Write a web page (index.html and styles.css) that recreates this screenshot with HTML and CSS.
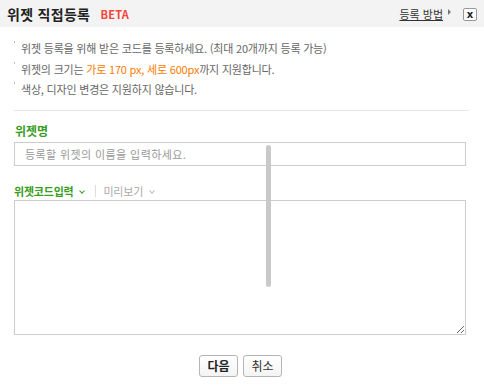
FILE: index.html
```html
<!DOCTYPE html>
<html lang="ko">
<head>
    <meta charset="UTF-8">
    <title>위젯 직접등록</title>
    <link rel="stylesheet" href="styles.css">
</head>
<body>
    <div class="layer-header">
        <h1 class="layer-title">위젯 직접등록 <span class="beta">BETA</span></h1>
        <a href="#" class="help-link">등록 방법</a>
        <span class="help-arrow"></span>
        <button class="close-btn" type="button">x</button>
    </div>

    <div class="layer-body">
        <ul class="notice-list">
            <li>위젯 등록을 위해 받은 코드를 등록하세요. (최대 20개까지 등록 가능)</li>
            <li>위젯의 크기는 <em>가로 170 px, 세로 600px</em>까지 지원합니다.</li>
            <li>색상, 디자인 변경은 지원하지 않습니다.</li>
        </ul>

        <div class="field-label">위젯명</div>
        <input type="text" class="name-input" placeholder="등록할 위젯의 이름을 입력하세요.">

        <div class="code-tabs">
            <a href="#" class="tab tab-on">위젯코드입력 <span class="chev"></span></a>
            <span class="tab-bar"></span>
            <a href="#" class="tab">미리보기 <span class="chev"></span></a>
        </div>
        <textarea class="code-input"></textarea>

        <div class="btn-area">
            <button type="button" class="btn btn-strong">다음</button>
            <button type="button" class="btn">취소</button>
        </div>
    </div>

    <div class="scroll-thumb"></div>
</body>
</html>
```

FILE: styles.css
```css
* {
    box-sizing: border-box;
    margin: 0;
    padding: 0;
}

body {
    font-family: "Noto Sans CJK KR", "Noto Sans", sans-serif;
    font-size: 11px;
    color: #666;
    background: #fff;
    position: relative;
    width: 484px;
    height: 387px;
    overflow: hidden;
}

a {
    text-decoration: none;
}

.layer-header {
    height: 27px;
    background: #f3f3f3;
    display: flex;
    align-items: center;
    padding: 0 7px;
}

.layer-title {
    flex: 1;
    font-size: 14px;
    font-weight: bold;
    color: #222;
    line-height: 18px;
    letter-spacing: 0.3px;
}

.beta {
    margin-left: 6px;
    font-size: 11px;
    color: #f5453d;
    letter-spacing: 0.2px;
    vertical-align: 1px;
}

.help-link {
    color: #333;
    font-size: 11px;
    text-decoration: underline;
    line-height: 14px;
}

.help-arrow {
    width: 0;
    height: 0;
    border-left: 3px solid #777;
    border-top: 3px solid transparent;
    border-bottom: 3px solid transparent;
    margin: 0 0 4px 5px;
}

.close-btn {
    width: 14px;
    height: 13px;
    margin-left: 12px;
    border: 1px solid #999;
    border-radius: 2px;
    background: #fff;
    font-family: "DejaVu Sans", sans-serif;
    font-size: 10px;
    font-weight: bold;
    line-height: 9px;
    color: #222;
    margin-top: 2px;
}

.layer-body {
    padding: 11px 18px 0 14px;
}

.notice-list {
    list-style: none;
    padding-bottom: 10px;
    border-bottom: 1px solid #e6e6e6;
    margin-right: -3px;
}

.notice-list li {
    line-height: 20.5px;
    letter-spacing: -0.2px;
}

.notice-list li::before {
    content: "";
    display: inline-block;
    width: 1px;
    height: 2px;
    background: #bbb;
    vertical-align: 10px;
    margin-right: 6px;
}

.notice-list em {
    font-style: normal;
    color: #ff7b00;
}

.field-label {
    margin-top: 12px;
    font-size: 12px;
    font-weight: bold;
    line-height: 16px;
    color: #3a9d23;
    padding-left: 1px;
}

.name-input {
    display: block;
    margin-top: 3px;
    width: 100%;
    height: 24px;
    border: 1px solid #ccc;
    padding: 0 10px;
    font-family: inherit;
    font-size: 11px;
    letter-spacing: 0.4px;
    outline: none;
}

.name-input::placeholder {
    color: #999;
}

.code-tabs {
    margin-top: 17px;
    display: flex;
    align-items: center;
    height: 16px;
}

.tab {
    font-size: 11px;
    color: #aaa;
    line-height: 16px;
    letter-spacing: -0.2px;
}

.tab-on {
    color: #3a9d23;
    font-weight: bold;
}

.chev {
    display: inline-block;
    width: 4px;
    height: 4px;
    border-right: 1px solid #bbb;
    border-bottom: 1px solid #bbb;
    transform: rotate(45deg);
    margin: 0 2px 3px 4px;
}

.tab-on .chev {
    border-color: #3a9d23;
    border-width: 0 1.5px 1.5px 0;
}

.tab-bar {
    width: 1px;
    height: 12px;
    background: #ddd;
    margin: 0 7px 0 9px;
}

.code-input {
    display: block;
    margin-top: 1px;
    width: 100%;
    height: 135px;
    border: 1px solid #ccc;
    outline: none;
    resize: both;
}

.btn-area {
    margin-top: 20px;
    display: flex;
    justify-content: center;
    gap: 5px;
    padding-left: 1px;
}

.btn {
    width: 39px;
    height: 22px;
    border: 1px solid #b5b5b5;
    border-radius: 3px;
    background: linear-gradient(#fff, #f4f4f4);
    font-family: inherit;
    font-size: 12px;
    color: #333;
    line-height: 18px;
}

.btn-strong {
    font-weight: bold;
    color: #222;
}

.scroll-thumb {
    position: absolute;
    left: 266px;
    top: 145px;
    width: 5px;
    height: 142px;
    border-radius: 3px;
    background: #c9c9c9;
}
```
